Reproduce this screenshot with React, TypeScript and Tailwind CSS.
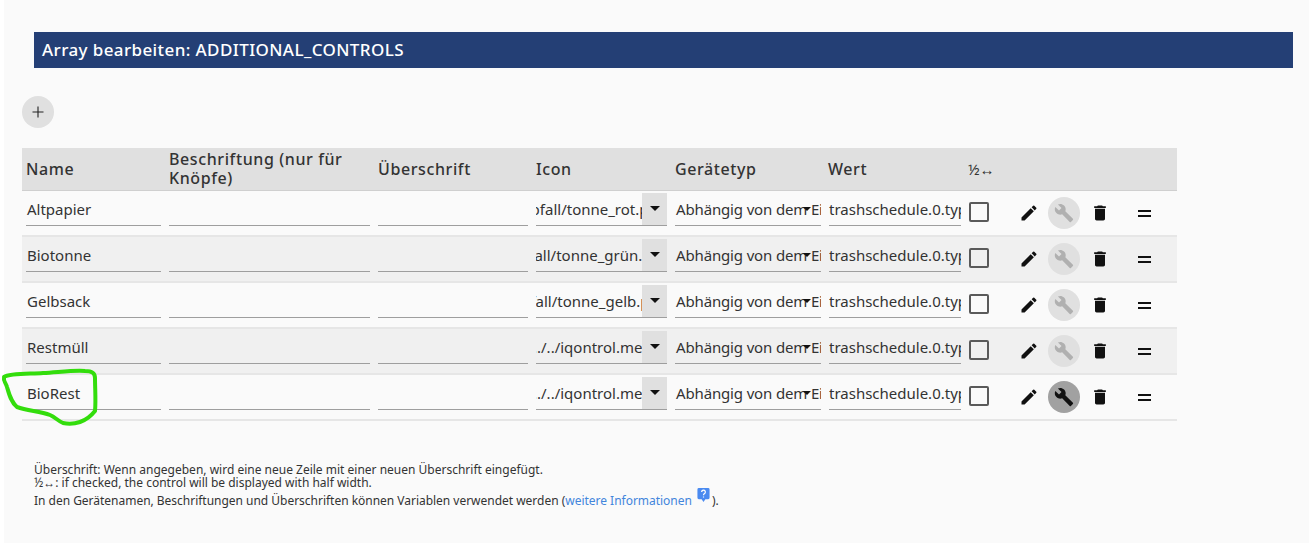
import React from "react";

const rows = [
  { name: "Altpapier", icon: "/../abfall/tonne_rot.png", align: "justify-end mr-[0px]", selected: false },
  { name: "Biotonne", icon: "/../abfall/tonne_grün.png", align: "justify-end -mr-[3px]", selected: false },
  { name: "Gelbsack", icon: "/abfall/tonne_gelb.png", align: "justify-end -mr-[1px]", selected: false },
  { name: "Restmüll", icon: "../../iqontrol.meta/user", align: "justify-start -ml-[3px]", selected: false },
  { name: "BioRest", icon: "../../iqontrol.meta/user", align: "justify-start -ml-[3px]", selected: true },
];

function Caret({ className }: { className: string }) {
  return (
    <svg viewBox="0 0 10 5" className={className} aria-hidden="true">
      <path d="M0 0h10L5 5z" fill="#111" />
    </svg>
  );
}

function Field({ children }: { children?: React.ReactNode }) {
  return (
    <div className="relative h-[34px] border-b border-[#9e9e9e] text-[15px] leading-[34px] text-[#333] whitespace-nowrap overflow-hidden">
      {children}
    </div>
  );
}

function Pencil() {
  return (
    <svg viewBox="0 0 24 24" className="h-[20px] w-[20px]" aria-hidden="true">
      <path fill="#111" d="M3 17.25V21h3.75L17.81 9.94l-3.75-3.75L3 17.25zM20.71 7.04a1 1 0 0 0 0-1.41l-2.34-2.34a1 1 0 0 0-1.41 0l-1.83 1.83 3.75 3.75 1.83-1.83z" />
    </svg>
  );
}

function Wrench({ color }: { color: string }) {
  return (
    <svg viewBox="0 0 24 24" className="h-[20px] w-[20px]" aria-hidden="true">
      <path fill={color} d="M22.7 19l-9.1-9.1c.9-2.3.4-5-1.5-6.9-2-2-5-2.4-7.4-1.3L9 6 6 9 1.6 4.7C.4 7.1.9 10.1 2.9 12.1c1.9 1.9 4.6 2.4 6.9 1.5l9.1 9.1c.4.4 1 .4 1.4 0l2.3-2.3c.5-.4.5-1.1.1-1.4z" />
    </svg>
  );
}

function Trash() {
  return (
    <svg viewBox="0 0 24 24" className="h-[20px] w-[20px]" aria-hidden="true">
      <path fill="#111" d="M6 19c0 1.1.9 2 2 2h8c1.100 0 2-.9 2-2V7H6v12zM19 4h-3.500l-1-1h-5l-1 1H5v2h14V4z" />
    </svg>
  );
}

export default function App() {
  return (
    <div className="relative h-[543px] w-[1309px] overflow-hidden bg-white pl-[4px] font-['Noto_Sans','Open_Sans',sans-serif]">
      <div className="h-full bg-[#fafafa] pt-[32px] pl-[18px]">
        <div className="ml-[12px] flex h-[36px] w-[1259px] items-center bg-[#243f75] pl-[8px] text-[17px] font-medium tracking-[0.4px] text-white">
          Array bearbeiten: ADDITIONAL_CONTROLS
        </div>

        <div className="mt-[28px] flex h-[32px] w-[32px] items-center justify-center rounded-full bg-[#e0e0e0] text-[#222]">
          <svg viewBox="0 0 12 12" className="h-[12px] w-[12px]" aria-hidden="true">
            <path d="M6 0.5v11M0.5 6h11" stroke="#222" strokeWidth="1.100" fill="none" />
          </svg>
        </div>

        <table className="mt-[20px] w-[1155px] table-fixed border-separate border-spacing-0">
          <colgroup>
            <col className="w-[143px]" />
            <col className="w-[209px]" />
            <col className="w-[158px]" />
            <col className="w-[139px]" />
            <col className="w-[154px]" />
            <col className="w-[141px]" />
            <col className="w-[43px]" />
            <col className="w-[168px]" />
          </colgroup>
          <thead>
            <tr className="h-[43px] bg-[#e0e0e0] text-[16px] font-medium leading-[19px] tracking-[0.6px] text-[#333]">
              <th className="border-b border-[#cfcfcf] pl-[4px] text-left font-medium">Name</th>
              <th className="border-b border-[#cfcfcf] pb-[1px] pl-[4px] text-left font-medium">Beschriftung (nur für Knöpfe)</th>
              <th className="border-b border-[#cfcfcf] pl-[4px] text-left font-medium">Überschrift</th>
              <th className="border-b border-[#cfcfcf] pl-[4px] text-left font-medium">Icon</th>
              <th className="border-b border-[#cfcfcf] pl-[4px] text-left font-medium">Gerätetyp</th>
              <th className="border-b border-[#cfcfcf] pl-[3px] text-left font-medium">Wert</th>
              <th className="border-b border-[#cfcfcf] pl-[2px] text-left text-[15px] font-normal tracking-normal">½↔</th>
              <th className="border-b border-[#cfcfcf]"></th>
            </tr>
          </thead>
          <tbody>
            {rows.map((r, i) => {
              const td = `h-[46px] border-b-2 border-[#e6e6e6] ${i % 2 === 1 ? "bg-[#f0f0f0]" : "bg-[#fafafa]"}`;
              return (
                <tr key={r.name}>
                  <td className={`${td} pl-[4px] pr-[4px] align-top pt-[1px]`}>
                    <Field><span className="pl-px">{r.name}</span></Field>
                  </td>
                  <td className={`${td} pl-[4px] pr-[4px] align-top pt-[1px]`}><Field /></td>
                  <td className={`${td} pl-[4px] pr-[4px] align-top pt-[1px]`}><Field /></td>
                  <td className={`${td} pl-[4px] pr-[4px] align-top pt-[1px]`}>
                    <div className="relative">
                      <Field>
                        <div className={`flex ${r.align}`}>{r.icon}</div>
                      </Field>
                      <div className="absolute right-0 top-[1px] flex h-[32px] w-[25px] items-center justify-center bg-[#e0e0e0]">
                        <Caret className="mb-[1px] h-[5px] w-[10px]" />
                      </div>
                    </div>
                  </td>
                  <td className={`${td} pl-[4px] pr-[4px] align-top pt-[1px]`}>
                    <Field>
                      <span className="pl-px tracking-[-0.15px]">Abhängig von dem Eingangsdatenpunkt</span>
                      <Caret className="absolute right-[10px] top-[15px] h-[4px] w-[8px]" />
                    </Field>
                  </td>
                  <td className={`${td} pl-[4px] pr-[5px] align-top pt-[1px]`}>
                    <Field>trashschedule.0.type</Field>
                  </td>
                  <td className={`${td} pl-[3px] align-middle`}>
                    <div className="mb-[3px] h-[20px] w-[20px] rounded-[2px] border-2 border-[#5a5a5a]" />
                  </td>
                  <td className={`${td} align-middle`}>
                    <div className="flex items-center">
                      <div className="ml-[10px] flex w-[20px] justify-center"><Pencil /></div>
                      <div className={`ml-[9px] flex h-[32px] w-[32px] items-center justify-center rounded-full ${r.selected ? "bg-[#a1a1a1]" : "bg-[#e0e0e0]"}`}>
                        <Wrench color={r.selected ? "#111" : "#b0b0b0"} />
                      </div>
                      <div className="ml-[10px] flex w-[20px] justify-center"><Trash /></div>
                      <div className="ml-[28px] flex w-[13px] flex-col gap-[3px]">
                        <div className="h-[2px] bg-[#111]" />
                        <div className="h-[2px] bg-[#111]" />
                      </div>
                    </div>
                  </td>
                </tr>
              );
            })}
          </tbody>
        </table>

        <div className="ml-[12px] mt-[42px] text-[12px] leading-[13px] text-[#333]">
          <div>Überschrift: Wenn angegeben, wird eine neue Zeile mit einer neuen Überschrift eingefügt.</div>
          <div>½↔: if checked, the control will be displayed with half width.</div>
          <div className="relative mt-[4px] flex items-center tracking-[-0.02px]">
            In den Gerätenamen, Beschriftungen und Überschriften können Variablen verwendet werden (
            <span className="text-[#4285dc]">weitere Informationen</span>
            <svg viewBox="0 0 13 15" className="mb-[5px] ml-[5px] mr-[2px] -mt-[5px] h-[14px] w-[13px]" aria-hidden="true">
              <path d="M1.500 0h10A1.500 1.500 0 0 1 13 1.500v9A1.500 1.500 0 0 1 11.500 12H8.500L6.500 15 4.500 12H1.500A1.500 1.500 0 0 1 0 10.500v-9A1.500 1.500 0 0 1 1.500 0z" fill="#4a8af0" />
              <path d="M4.500 4.200a2 2 0 1 1 3 1.800c-.7.500-1 .8-1 1.800M6.500 9v1.200" stroke="#fff" strokeWidth="1.300" fill="none" />
            </svg>
            ).
          </div>
        </div>
      </div>

      <svg className="pointer-events-none absolute left-0 top-[366px] h-[62px] w-[100px]" viewBox="0 0 100 62" aria-hidden="true">
        <path
          d="M4 11C10 7 30 8 43 7C60 6 75 4 85 5C92 5 95 7 95 12C95 22 96 35 95 45C91 50 86 54 80 56C74 58 68 58 63 57C58 55 55 51 50 49C40 45 28 45 17 41C11 36 9 28 7 21C6 17 3 15 4 11Z"
          fill="none"
          stroke="#33dd0c"
          strokeWidth="4"
          strokeLinejoin="round"
        />
      </svg>
    </div>
  );
}
